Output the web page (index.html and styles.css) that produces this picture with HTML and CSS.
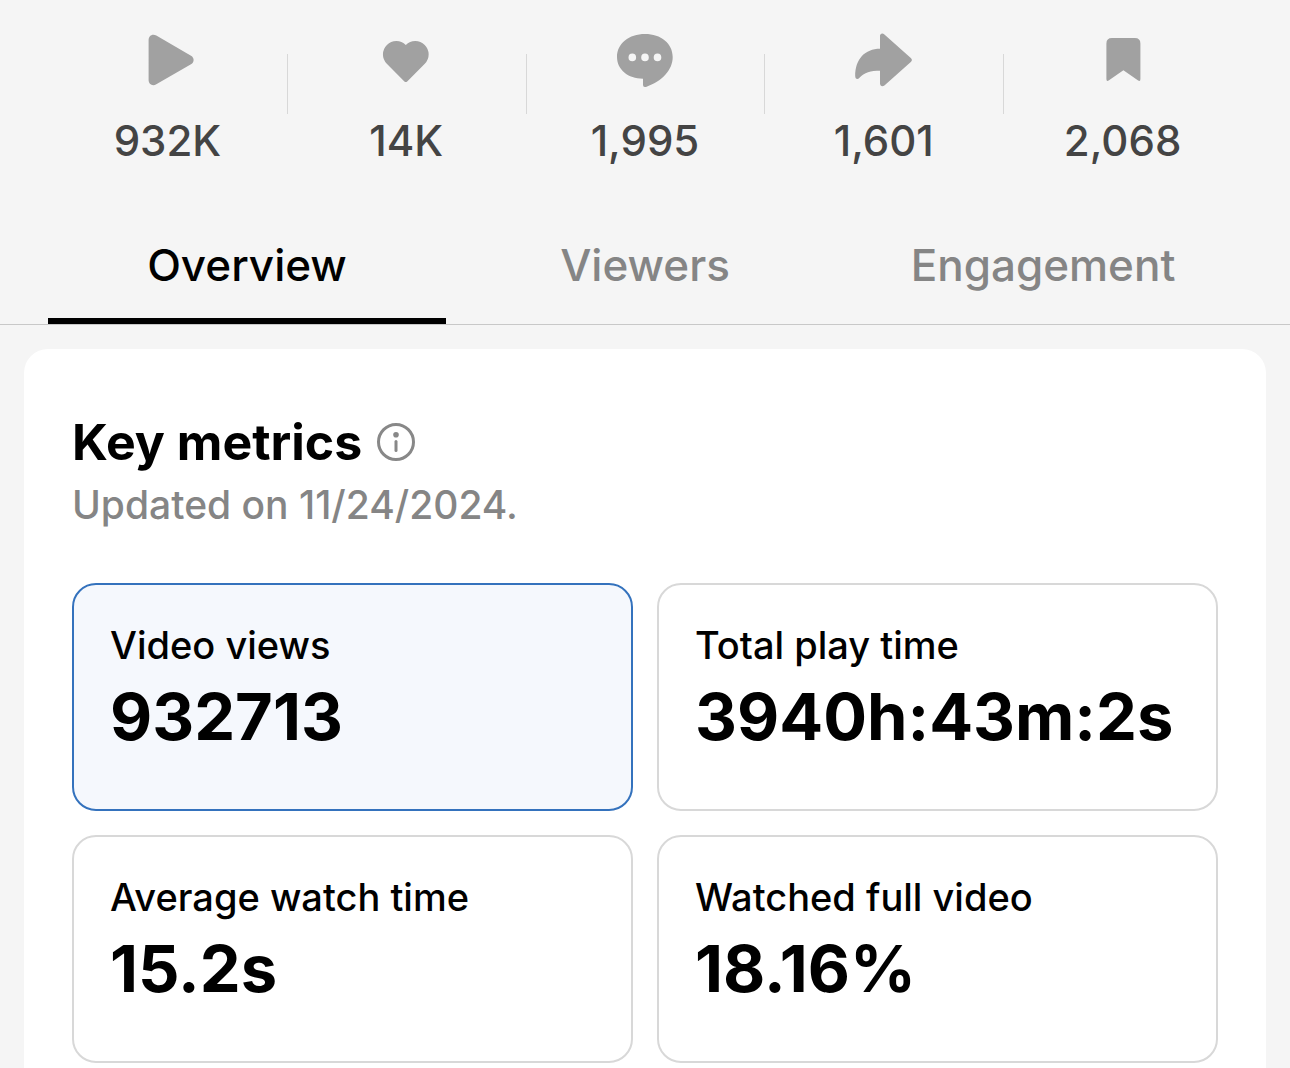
FILE: index.html
```html
<!DOCTYPE html>
<html lang="en">
<head>
<meta charset="utf-8">
<meta name="viewport" content="width=device-width, initial-scale=1">
<title>Video analytics</title>
<link rel="stylesheet" href="styles.css">
</head>
<body>
<ul class="stats">
  <li class="stat">
    <svg class="stat-icon" viewBox="0 0 60 60" role="img" aria-label="Views"><path d="M11.600 10C11.600 5.600 15.500 3.300 19.300 5.500L54 25.700C57.500 27.700 57.500 32.300 54 34.300L19.300 54.300C15.500 56.500 11.600 54.200 11.600 50Z"/></svg>
    <span>932K</span>
  </li>
  <li class="stat">
    <svg class="stat-icon" viewBox="0 0 60 60" role="img" aria-label="Likes"><path d="M29.800 15A13.300 13.300 0 0 0 10.800 33.800L28.400 51.400Q29.800 52.700 31.200 51.400L48.800 33.800A13.300 13.300 0 0 0 29.800 15Z"/></svg>
    <span>14K</span>
  </li>
  <li class="stat">
    <svg class="stat-icon" viewBox="0 0 60 60" role="img" aria-label="Comments"><path fill-rule="evenodd" d="M30 4C46 4 57.700 13.500 57.700 27C57.700 40 47 51.500 31 56.900Q28 57.700 28 55V48.700C13 48.700 2 39.500 2 27C2 13.500 14 4 30 4ZM17.300 23.600a3.800 3.800 0 1 0 0 7.600a3.800 3.800 0 1 0 0-7.600ZM30 23.600a3.800 3.800 0 1 0 0 7.600a3.800 3.800 0 1 0 0-7.600ZM42.500 23.600a3.800 3.800 0 1 0 0 7.600a3.800 3.800 0 1 0 0-7.600Z"/></svg>
    <span>1,995</span>
  </li>
  <li class="stat">
    <svg class="stat-icon" viewBox="0 0 60 60" role="img" aria-label="Shares"><path d="M26 6C26 3.500 28.400 2.700 30.400 4.400L56.800 28Q59 30 56.800 32L30.400 55.400C28.400 57 26 56 26 53.500V40.800C17 40.800 10 42.500 5.500 47.800C3.600 50 1.200 49.300 1.200 46C1.200 29 11 18.700 26 18.700Z"/></svg>
    <span>1,601</span>
  </li>
  <li class="stat">
    <svg class="stat-icon" viewBox="0 0 60 60" role="img" aria-label="Saves"><path d="M13.400 13.500Q13.400 8 18.900 8H41.900Q47.400 8 47.400 13.500V49Q47.400 52 44.800 50.300L30.400 40.200L16 50.300Q13.400 52 13.400 49Z"/></svg>
    <span>2,068</span>
  </li>
</ul>
<nav class="tabs">
  <a class="tab tab-active" href="#overview" aria-current="page">Overview</a>
  <a class="tab" href="#viewers">Viewers</a>
  <a class="tab" href="#engagement">Engagement</a>
</nav>
<main class="panel" id="overview">
  <header class="panel-head">
    <h1>Key metrics</h1>
    <button class="info" type="button" aria-label="About key metrics"><svg viewBox="0 0 40 40"><circle cx="20" cy="20" r="17.500"/><path d="M20 19.500V28.500" stroke-linecap="round"/><circle class="info-dot" cx="20" cy="12.700" r="2.800"/></svg></button>
  </header>
  <p class="updated">Updated on 11/24/2024.</p>
  <div class="metrics">
    <button class="metric metric-selected" type="button"><span class="metric-label">Video views</span><span class="metric-value">932713</span></button>
    <button class="metric" type="button"><span class="metric-label">Total play time</span><span class="metric-value">3940h:43m:2s</span></button>
    <button class="metric" type="button"><span class="metric-label">Average watch time</span><span class="metric-value">15.2s</span></button>
    <button class="metric" type="button"><span class="metric-label">Watched full video</span><span class="metric-value">18.16%</span></button>
  </div>
</main>
</body>
</html>
```
FILE: styles.css
```css
* { box-sizing: border-box; }
body {
  margin: 0;
  background: #f5f5f5;
  color: #000;
  font-family: Inter, "Liberation Sans", sans-serif;
}
button { font: inherit; color: inherit; cursor: pointer; }
.stats {
  display: flex;
  margin: 0;
  padding: 30px 48px 0;
  list-style: none;
}
.stat {
  position: relative;
  flex: 1;
  display: flex;
  flex-direction: column;
  align-items: center;
  gap: 23px;
  color: #444;
  font-size: 42px;
  font-weight: 500;
  line-height: 56px;
}
.stat + .stat::before {
  content: "";
  position: absolute;
  left: 0;
  top: 24px;
  height: 60px;
  border-left: 1px solid #d8d8d8;
}
.stat-icon { width: 60px; height: 60px; fill: #a1a1a1; }
.tabs {
  display: flex;
  margin-top: 36px;
  padding: 0 48px;
  border-bottom: 1px solid #c8c8c8;
}
.tab {
  flex: 1;
  padding: 32px 0 25px;
  border-bottom: 6px solid transparent;
  color: #858585;
  font-size: 44px;
  font-weight: 500;
  line-height: 56px;
  text-align: center;
  text-decoration: none;
}
.tab-active { color: #000; border-color: #000; }
.panel {
  margin: 24px 24px 0;
  padding: 60px 48px 48px;
  border-radius: 24px;
  background: #fff;
}
.panel-head { display: flex; align-items: center; gap: 14px; }
h1 { margin: 0; font-size: 50px; font-weight: 700; line-height: 66px; }
.info { width: 40px; height: 40px; padding: 0; border: 0; background: none; }
.info svg { display: block; fill: none; stroke: #888; stroke-width: 3; }
.info .info-dot { fill: #888; stroke: none; }
.updated { margin: 0; color: #858585; font-size: 39px; font-weight: 500; line-height: 60px; }
.metrics {
  display: grid;
  grid-template-columns: repeat(2, minmax(0, 1fr));
  gap: 24px;
  margin-top: 48px;
}
.metric {
  display: flex;
  flex-direction: column;
  min-height: 228px;
  padding: 33px 36px;
  border: 2px solid #d8d8d8;
  border-radius: 24px;
  background: #fff;
  text-align: left;
}
.metric-selected { border-color: #3472bd; background: #f5f8fd; }
.metric-label { font-size: 38px; font-weight: 500; line-height: 54px; }
.metric-value { font-size: 65px; font-weight: 700; line-height: 90px; }
```
